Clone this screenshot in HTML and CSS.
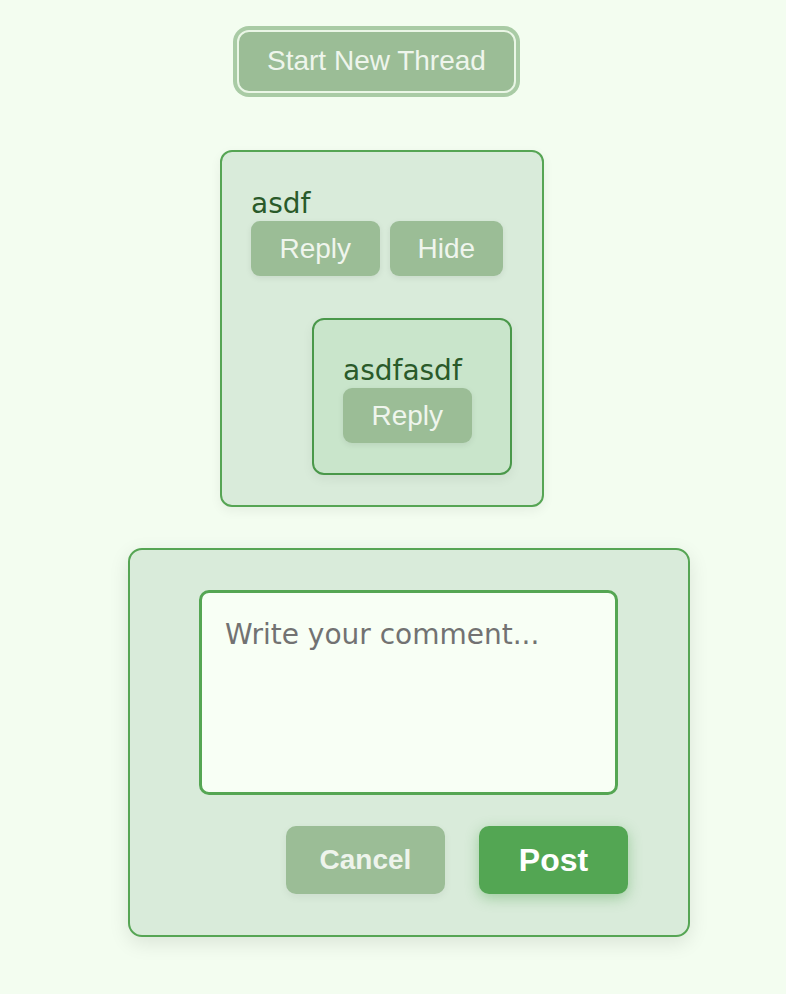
FILE: index.html
```html
<!DOCTYPE html>
<html>
<head>
<meta charset="utf-8">
<link rel="stylesheet" href="styles.css">
</head>
<body>
<main class="page">
  <button class="start-btn">Start New Thread</button>
  <section class="thread">
    <div class="comment-text">asdf</div>
    <div class="actions">
      <button class="btn muted reply">Reply</button>
      <button class="btn muted">Hide</button>
    </div>
    <div class="thread nested">
      <div class="comment-text">asdfasdf</div>
      <div class="actions">
        <button class="btn muted reply">Reply</button>
      </div>
    </div>
  </section>
  <section class="form-card">
    <textarea class="comment-input" placeholder="Write your comment..."></textarea>
    <div class="form-actions">
      <button class="btn-lg cancel">Cancel</button>
      <button class="btn-lg post">Post</button>
    </div>
  </section>
</main>
</body>
</html>
```
FILE: styles.css
```css
html, body {
  margin: 0;
  padding: 0;
  background: #f3fdf0;
}
.page {
  display: flex;
  flex-direction: column;
  align-items: flex-start;
  padding-top: 30px;
  padding-bottom: 40px;
}
.start-btn {
  margin-left: 237px;
  font-family: "Liberation Sans", Arial, sans-serif;
  font-size: 28px;
  line-height: 32px;
  color: #eef5ec;
  background: #9bbd96;
  border: 2px solid #eaf6e6;
  border-radius: 12px;
  padding: 13px 28px 14px;
  box-shadow: 0 0 0 4px #a9cba5;
  cursor: pointer;
}
.thread {
  margin-top: 57px;
  margin-left: 220px;
  width: 324px;
  box-sizing: border-box;
  background: #d9ebda;
  border: 2px solid #56a554;
  border-radius: 12px;
  padding: 35px 30px 30px 29px;
  box-shadow: 0 4px 12px rgba(0, 0, 0, 0.06);
}
.thread.nested {
  margin: 42px 0 0 61px;
  width: auto;
  padding-top: 34px;
  background: #c9e5cb;
  border-color: #4a984a;
}
.comment-text {
  font-family: "DejaVu Sans", Verdana, sans-serif;
  font-size: 28px;
  line-height: 33px;
  color: #2a5a2a;
}
.actions {
  display: flex;
  gap: 10px;
  margin-top: 1px;
}
.btn {
  font-family: "Liberation Sans", Arial, sans-serif;
  font-size: 28px;
  height: 55px;
  padding: 0 28px;
  border: none;
  border-radius: 9px;
  cursor: pointer;
}
.btn.reply {
  padding: 0 28.5px;
}
.muted {
  background: #9bbd96;
  color: #eff5ed;
  box-shadow: 0 2px 6px rgba(0, 0, 0, 0.08);
}
.form-card {
  margin-top: 41px;
  margin-left: 128px;
  width: 562px;
  box-sizing: border-box;
  background: #d9ebda;
  border: 2px solid #56a554;
  border-radius: 14px;
  padding: 40px 0 41px;
  box-shadow: 0 6px 20px rgba(0, 0, 0, 0.1);
  display: flex;
  flex-direction: column;
  align-items: center;
}
.comment-input {
  display: block;
  width: 419px;
  height: 205px;
  box-sizing: border-box;
  margin-left: -1px;
  background: #f8fff5;
  border: 3px solid #55a653;
  border-radius: 10px;
  padding: 25px 23px 20px;
  font-family: "DejaVu Sans", Verdana, sans-serif;
  font-size: 28px;
  line-height: 33px;
  color: #333;
  resize: none;
  outline: none;
}
.comment-input::placeholder {
  color: #727272;
}
.form-actions {
  align-self: stretch;
  display: flex;
  justify-content: flex-end;
  gap: 34px;
  padding-right: 60px;
  margin-top: 31px;
}
.btn-lg {
  font-family: "Liberation Sans", Arial, sans-serif;
  font-weight: bold;
  height: 68px;
  border: none;
  border-radius: 10px;
  cursor: pointer;
}
.cancel {
  font-size: 28px;
  width: 159px;
  background: #9bbd96;
  color: #eef4ec;
  box-shadow: 0 3px 8px rgba(0, 0, 0, 0.06);
}
.post {
  font-size: 32px;
  width: 149px;
  background: #53a653;
  color: #ffffff;
  box-shadow: 0 4px 14px rgba(83, 166, 83, 0.45);
}
```
